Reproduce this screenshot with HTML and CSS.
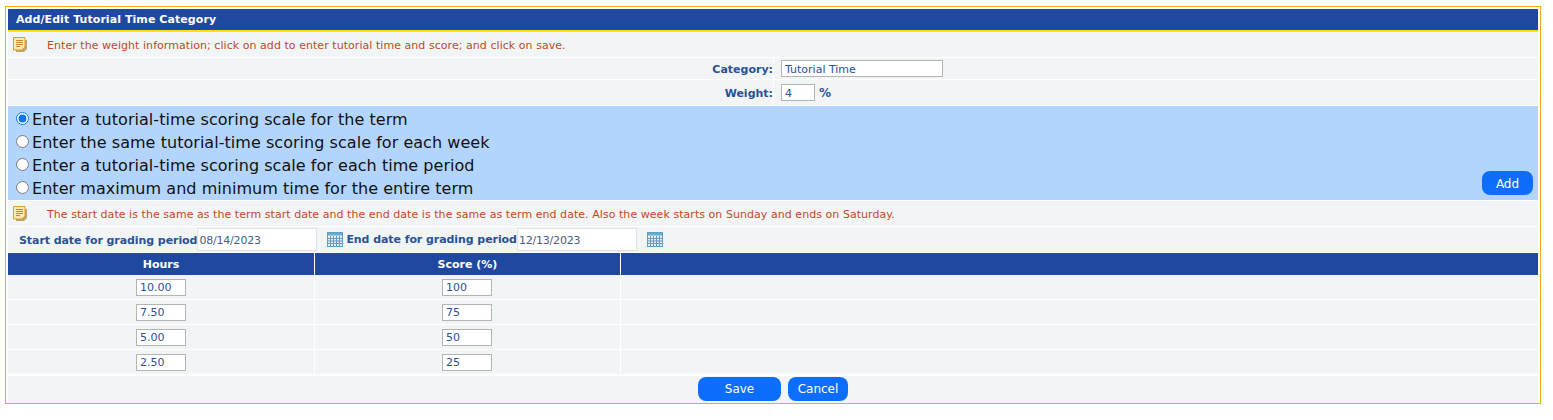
FILE: index.html
```html
<!DOCTYPE html>
<html lang="en">
<head>
    <meta charset="UTF-8">
    <title>Add/Edit Tutorial Time Category</title>
    <link rel="stylesheet" href="styles.css">
</head>
<body>
    <div class="panel">
        <div class="panel-title">Add/Edit Tutorial Time Category</div>

        <div class="note note-first">
            <svg class="note-icon" viewBox="0 0 14 15"><path d="M3 3h11v9l-3 3H3z" fill="#c4a46e"/><path d="M0.500 0.500h11.500v9.500l-3 3H0.500z" fill="#fbe9b0" stroke="#dc9c2c"/><path d="M3 3.500h7M3 5.500h7M3 7.500h7M3 9.500h4" stroke="#c9862a"/></svg>
            <span>Enter the weight information; click on add to enter tutorial time and score; and click on save.</span>
        </div>

        <div class="field-row field-category">
            <label class="field-label" for="category">Category:</label>
            <div class="field-value"><input class="text-input input-category" id="category" type="text" value="Tutorial Time"></div>
        </div>
        <div class="field-row field-weight">
            <label class="field-label" for="weight">Weight:</label>
            <div class="field-value"><input class="text-input input-weight" id="weight" type="text" value="4"> <b class="unit">%</b></div>
        </div>

        <div class="scale-options">
            <div class="option-list">
                <label class="option"><input type="radio" name="scale" checked>Enter a tutorial-time scoring scale for the term</label>
                <label class="option"><input type="radio" name="scale">Enter the same tutorial-time scoring scale for each week</label>
                <label class="option"><input type="radio" name="scale">Enter a tutorial-time scoring scale for each time period</label>
                <label class="option"><input type="radio" name="scale">Enter maximum and minimum time for the entire term</label>
            </div>
            <button class="btn btn-add" type="button">Add</button>
        </div>

        <div class="note note-second">
            <svg class="note-icon" viewBox="0 0 14 15"><path d="M3 3h11v9l-3 3H3z" fill="#c4a46e"/><path d="M0.500 0.500h11.500v9.500l-3 3H0.500z" fill="#fbe9b0" stroke="#dc9c2c"/><path d="M3 3.500h7M3 5.500h7M3 7.500h7M3 9.500h4" stroke="#c9862a"/></svg>
            <span>The start date is the same as the term start date and the end date is the same as term end date. Also the week starts on Sunday and ends on Saturday.</span>
        </div>

        <div class="date-row">
            <label class="date-label" for="start-date">Start date for grading period</label>
            <input class="date-input" id="start-date" type="text" value="08/14/2023">
            <svg class="cal-icon" viewBox="0 0 16 15"><rect x="0.500" y="0.500" width="15" height="14" fill="#dfeef7" stroke="#5f9fc4"/><rect x="1" y="1" width="14" height="2.500" fill="#6ea9cc"/><path d="M3.500 4v10M6.500 4v10M9.500 4v10M12.500 4v10M1 6.500h14M1 9h14M1 11.500h14" stroke="#6f97b8"/></svg>
            <label class="date-label" for="end-date">End date for grading period</label>
            <input class="date-input" id="end-date" type="text" value="12/13/2023">
            <svg class="cal-icon" viewBox="0 0 16 15"><rect x="0.500" y="0.500" width="15" height="14" fill="#dfeef7" stroke="#5f9fc4"/><rect x="1" y="1" width="14" height="2.500" fill="#6ea9cc"/><path d="M3.500 4v10M6.500 4v10M9.500 4v10M12.500 4v10M1 6.500h14M1 9h14M1 11.500h14" stroke="#6f97b8"/></svg>
        </div>

        <table class="score-table">
            <thead>
                <tr>
                    <th class="col-hours">Hours</th>
                    <th class="col-score">Score (%)</th>
                    <th></th>
                </tr>
            </thead>
            <tbody>
                <tr>
                    <td><input class="text-input input-cell" type="text" value="10.00"></td>
                    <td><input class="text-input input-cell" type="text" value="100"></td>
                    <td></td>
                </tr>
                <tr>
                    <td><input class="text-input input-cell" type="text" value="7.50"></td>
                    <td><input class="text-input input-cell" type="text" value="75"></td>
                    <td></td>
                </tr>
                <tr>
                    <td><input class="text-input input-cell" type="text" value="5.00"></td>
                    <td><input class="text-input input-cell" type="text" value="50"></td>
                    <td></td>
                </tr>
                <tr>
                    <td><input class="text-input input-cell" type="text" value="2.50"></td>
                    <td><input class="text-input input-cell" type="text" value="25"></td>
                    <td></td>
                </tr>
            </tbody>
        </table>

        <div class="actions">
            <button class="btn btn-save" type="button">Save</button>
            <button class="btn btn-cancel" type="button">Cancel</button>
        </div>
    </div>
</body>
</html>
```

FILE: styles.css
```css
body {
    font-family: "DejaVu Sans", Verdana, sans-serif;
    font-size: 11px;
    margin: 6px 0 0 5px;
    background-color: #fff;
}

.panel {
    width: 1530px;
    padding: 2px 2px 0;
    border: 1px solid #f0a81c;
    background-color: #fff;
}

.panel-title {
    height: 21px;
    line-height: 22px;
    padding-left: 8px;
    background-color: #1f48a1;
    border-bottom: 2px solid #ffe600;
    color: #fff;
    font-weight: bold;
    letter-spacing: 0.07px;
}

.note {
    display: flex;
    align-items: center;
    background-color: #f1f5f6;
    color: #c4491c;
    padding-left: 5px;
    letter-spacing: 0.05px;
}

.note span {
    padding-top: 1px;
}

.note-first {
    height: 25px;
    margin-bottom: 1px;
}

.note-second {
    height: 25px;
    margin-bottom: 1px;
}

.note-icon {
    width: 14px;
    height: 15px;
    margin-right: 20px;
    flex-shrink: 0;
}

.field-row {
    display: flex;
    margin-bottom: 1px;
    background-color: #f1f5f6;
}

.field-category {
    height: 21px;
}

.field-weight {
    height: 25px;
}

.field-label {
    width: 765px;
    border-right: 1px solid #fff;
    text-align: right;
    line-height: 24px;
    color: #2b5197;
    font-weight: bold;
}

.field-weight .field-label {
    line-height: 27px;
}

.field-value {
    display: flex;
    align-items: center;
    gap: 4px;
    padding-left: 7px;
    color: #2b5197;
}

.unit {
    font-size: 12px;
    padding-top: 1px;
}

.text-input {
    box-sizing: border-box;
    height: 17px;
    padding: 0 3px;
    border: 1px solid #b4b4b4;
    background-color: #fff;
    color: #2b5197;
    font-family: inherit;
    font-size: 11px;
}

.input-category,
.input-weight {
    padding-top: 1px;
}

.input-category {
    width: 162px;
}

.input-weight {
    width: 34px;
}

.scale-options {
    display: flex;
    justify-content: space-between;
    align-items: flex-end;
    height: 94px;
    margin-bottom: 1px;
    background-color: #b3d5fd;
}

.option-list {
    display: flex;
    flex-direction: column;
}

.option {
    display: flex;
    align-items: center;
    height: 23px;
    color: #111;
    font-size: 16px;
    letter-spacing: 0.04px;
}

.option input {
    width: 13px;
    height: 13px;
    margin: 0 3px 2px 8px;
}

.btn {
    border: none;
    border-radius: 8px;
    background-color: #0d6efd;
    color: #fff;
    font-family: inherit;
    font-size: 12px;
    padding: 0;
}

.btn-add {
    width: 51px;
    height: 24px;
    margin: 0 5px 5px 0;
    padding-top: 1px;
}

.date-row {
    display: flex;
    align-items: center;
    height: 25px;
    margin-bottom: 1px;
    background-color: #f1f5f6;
}

.date-label {
    color: #2b5197;
    font-weight: bold;
    white-space: nowrap;
    letter-spacing: -0.07px;
}

.cal-icon + .date-label {
    margin-left: 3px;
}

.date-row > .date-label:first-child {
    margin-left: 11px;
    padding-top: 2px;
}

.date-input {
    box-sizing: border-box;
    width: 120px;
    height: 23px;
    padding: 1px 1px 0;
    border: 1px solid #dde2e6;
    background-color: #fff;
    color: #4a6080;
    font-family: inherit;
    font-size: 11px;
    letter-spacing: -0.2px;
}

.cal-icon {
    width: 16px;
    height: 15px;
    margin-left: 10px;
}

.score-table {
    width: 100%;
    border-collapse: collapse;
    table-layout: fixed;
}

.score-table th {
    height: 22px;
    padding: 0;
    background-color: #1f48a1;
    border-right: 1px solid #fff;
    color: #fff;
    font-size: 11px;
}

.score-table th:last-child,
.score-table td:last-child {
    border-right: none;
}

.col-hours {
    width: 306px;
}

.col-score {
    width: 305px;
}

.score-table td {
    height: 24px;
    padding: 0;
    background-color: #f1f5f6;
    border-right: 1px solid #fff;
    border-bottom: 1px solid #fff;
    text-align: center;
}

.input-cell {
    display: block;
    width: 50px;
    margin: 0 auto;
}

.score-table td:nth-child(2) .input-cell {
    margin-left: 127px;
}

.actions {
    display: flex;
    justify-content: center;
    gap: 7px;
    align-items: flex-start;
    box-sizing: border-box;
    height: 28px;
    padding-top: 1px;
    border-top: 1px solid #fff;
    background-color: #f1f5f6;
}

.btn-save {
    width: 83px;
    height: 24px;
}

.btn-cancel {
    width: 60px;
    height: 24px;
}
```
